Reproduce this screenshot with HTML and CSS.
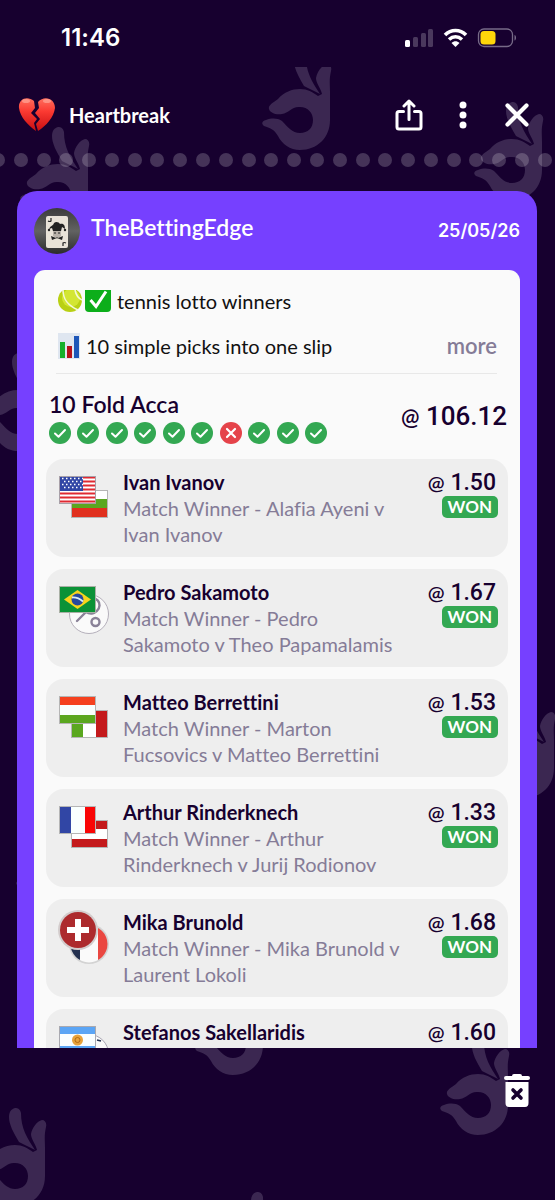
FILE: index.html
```html
<!DOCTYPE html>
<html lang="en">
<head>
    <meta charset="UTF-8">
    <meta name="viewport" content="width=device-width, initial-scale=1.0">
    <title>Heartbreak</title>
    <link rel="stylesheet" href="styles.css">
</head>
<body>

<!-- shared shapes -->
<svg class="defs" aria-hidden="true">
    <symbol id="hand" viewBox="0 0 70 98">
        <path d="M38 0C41 0 43 1 44 5C44 20 50 30 58 42C53 39 47 37 42 34C36 24 32 16 32 9C32 4 34 1 38 0Z"/>
        <path d="M65 12C68 12 70 15 69 19C67 28 68 32 68 40V68C68 86 55 98 38 98C28 98 20 92 16 84C12 77 8 76 2 74C-1 72 0 69 4 68C10 66 15 66 20 69C26 75 30 81 38 81C46 81 51 76 51 68C51 61 46 55 38 55C30 54 27 61 20 62C14 63 8 61 7 57C6 53 11 51 16 47C22 40 30 37 38 37C46 37 50 40 56 44L60 42C59 37 54 31 54 26C55 20 60 13 65 12Z"/>
    </symbol>
    <symbol id="tick" viewBox="0 0 22 22">
        <circle cx="11" cy="11" r="11" fill="#33a852"/>
        <path d="M6 11.500l3.500 3.200L16 8" fill="none" stroke="#fff" stroke-width="2" stroke-linecap="round" stroke-linejoin="round"/>
    </symbol>
    <symbol id="cross" viewBox="0 0 22 22">
        <circle cx="11" cy="11" r="11" fill="#e5434a"/>
        <path d="M7 7l8 8M15 7l-8 8" fill="none" stroke="#fff" stroke-width="2.200" stroke-linecap="round"/>
    </symbol>
</svg>

<svg class="hands" aria-hidden="true">
    <use href="#hand" x="20" y="60" width="70" height="98"/>
    <use href="#hand" x="262" y="-15" width="70" height="98"/>
    <use href="#hand" x="474" y="35" width="70" height="98"/>
    <use href="#hand" x="-20" y="286" width="70" height="98"/>
    <use href="#hand" x="486" y="633" width="70" height="98"/>
    <use href="#hand" x="16" y="745" width="70" height="98"/>
    <use href="#hand" x="195" y="910" width="70" height="98"/>
    <use href="#hand" x="440" y="970" width="70" height="98"/>
    <use href="#hand" x="-23" y="1041" width="70" height="98"/>
    <use href="#hand" x="219" y="1125" width="70" height="98"/>
</svg>

<div class="status">
    <span class="clock">11:46</span>
    <svg width="112" height="20" viewBox="0 0 112 20">
        <rect x="0" y="12" width="5" height="7" rx="1.500" fill="#fff"/>
        <g fill="#fff" opacity=".22">
            <rect x="8" y="9" width="5" height="10" rx="1.500"/>
            <rect x="16" y="5" width="5" height="14" rx="1.500"/>
            <rect x="23" y="1" width="5" height="18" rx="1.500"/>
        </g>
        <g fill="none" stroke="#fff" stroke-width="3.600">
            <path d="M40 7C46 1 55 1 61 7"/>
            <path d="M44 11.500C48 8 53 8 57 11.500"/>
        </g>
        <path d="M46.500 15C49 12.800 52 12.800 54.500 15L50.500 19Z" fill="#fff"/>
        <rect x="73.500" y="1" width="34" height="17.500" rx="5.500" fill="none" stroke="#776a88" stroke-width="1.300"/>
        <rect x="75.500" y="3" width="15" height="13.500" rx="3.500" fill="#ffd60a"/>
        <path d="M109.500 7V12.500C111.500 12 111.500 7.500 109.500 7Z" fill="#776a88"/>
    </svg>
</div>

<header class="topbar">
    <svg class="heart" width="38" height="36" viewBox="0 0 38 36">
        <defs>
            <linearGradient id="red" x1="0" y1="0" x2="0" y2="1">
                <stop offset="0" stop-color="#ff6f5e"/>
                <stop offset=".4" stop-color="#fb3a32"/>
                <stop offset="1" stop-color="#c80f12"/>
            </linearGradient>
        </defs>
        <path d="M16 4C9-2 0 2 1 11C2 20 10 28 18 34L16 26L19 22L13 16L17 11Z" fill="url(#red)"/>
        <path d="M20 5C26-2 37 1 37 11C36 20 28 29 20 34L18 27L22 22L17 16L21 11Z" fill="url(#red)"/>
        <ellipse cx="8" cy="4" rx="4" ry="2" fill="#ffb0a4" opacity=".6"/>
        <ellipse cx="29" cy="4" rx="4" ry="2" fill="#ffb0a4" opacity=".6"/>
    </svg>
    <h1>Heartbreak</h1>
    <button class="icon-btn" aria-label="Share">
        <svg width="28" height="32" viewBox="0 0 28 32" fill="none" stroke="#fff" stroke-width="3" stroke-linecap="round" stroke-linejoin="round">
            <path d="M8.500 12.500H4Q2 12.500 2 14.500V28Q2 30 4 30H24Q26 30 26 28V14.500Q26 12.500 24 12.500H19.500"/>
            <path d="M14 20.500V3M9 7L14 2L19 7"/>
        </svg>
    </button>
    <button class="icon-btn" aria-label="Menu">
        <svg width="28" height="28" viewBox="0 0 28 28" fill="#fff">
            <circle cx="14" cy="4" r="3.500"/>
            <circle cx="14" cy="14" r="3.500"/>
            <circle cx="14" cy="24" r="3.500"/>
        </svg>
    </button>
    <button class="icon-btn" aria-label="Close">
        <svg width="28" height="28" viewBox="0 0 28 28" stroke="#fff" stroke-width="4.200" stroke-linecap="round">
            <path d="M4.500 4.500L23.500 23.500M23.500 4.500L4.500 23.500"/>
        </svg>
    </button>
</header>

<div class="dots">
    <i></i><i></i><i></i><i></i><i></i><i></i><i></i><i></i><i></i><i></i><i></i><i></i><i></i>
    <i></i><i></i><i></i><i></i><i></i><i></i><i></i><i></i><i></i><i></i><i></i><i></i>
</div>

<main>
    <div class="slip">
        <div class="owner">
            <svg width="46" height="46" viewBox="0 0 46 46">
                <defs>
                    <linearGradient id="grey" x1="0" y1="0" x2="0" y2="1">
                        <stop offset="0" stop-color="#3b3b3b"/>
                        <stop offset=".5" stop-color="#626262"/>
                        <stop offset="1" stop-color="#2b2b2b"/>
                    </linearGradient>
                </defs>
                <circle cx="23" cy="23" r="23" fill="url(#grey)"/>
                <rect x="12" y="8" width="22" height="32" rx="2" fill="#e9e3d8"/>
                <path d="M17 10V13Q16 14 14 13M29 38V35Q30 34 32 35" fill="none" stroke="#222" stroke-width="1.200"/>
                <path d="M15 21C17 17 19 18 20 15C22 13 25 14 26 16C30 15 31 18 31 21L28 19L27 23H19L18 20Z" fill="#222"/>
                <circle cx="15" cy="22" r="1.200" fill="#222"/>
                <circle cx="31" cy="22" r="1.200" fill="#222"/>
                <path d="M19 23H27V28L23 31L19 28Z" fill="#b9b2aa"/>
                <path d="M17 28L22 30L23 29L24 30L29 28L28 32L23 30L18 32Z" fill="#222"/>
                <path d="M20 25h2M24 25h2" stroke="#222"/>
            </svg>
            <span class="owner-name">TheBettingEdge</span>
            <time datetime="2026-05-25">25/05/26</time>
        </div>

        <div class="panel">
            <div class="note">
                <p>
                    <svg width="24" height="22" viewBox="0 0 24 22">
                        <circle cx="12" cy="10" r="12" fill="#b9d014"/>
                        <circle cx="13" cy="8" r="9" fill="#d3e633"/>
                        <path d="M5 0C5 9 9 15 20 20M17 0C18 5 20 8 24 10" fill="none" stroke="#f4f8d8" stroke-width="1.600"/>
                    </svg>
                    <svg width="26" height="22" viewBox="0 0 26 22">
                        <path d="M0 0H26V18Q26 22 22 22H4Q0 22 0 18Z" fill="#0cae1a"/>
                        <path d="M5.500 10L11 16.500L21 1.500" fill="none" stroke="#fff" stroke-width="3"/>
                    </svg>
                    <span>tennis lotto winners</span>
                </p>
                <p>
                    <svg class="chart" width="22" height="26" viewBox="0 0 22 26">
                        <rect width="22" height="26" fill="#dfe6f0"/>
                        <rect x="2" y="9" width="5" height="16" fill="#15b02b"/>
                        <rect x="9" y="13" width="5" height="12" fill="#b5121b"/>
                        <rect x="16" y="3" width="5" height="22" fill="#1d56b8"/>
                    </svg>
                    <span>10 simple picks into one slip</span>
                    <button class="more">more</button>
                </p>
            </div>

            <div class="summary">
                <div>
                    <h2>10 Fold Acca</h2>
                    <div class="results">
                        <svg><use href="#tick"/></svg>
                        <svg><use href="#tick"/></svg>
                        <svg><use href="#tick"/></svg>
                        <svg><use href="#tick"/></svg>
                        <svg><use href="#tick"/></svg>
                        <svg><use href="#tick"/></svg>
                        <svg><use href="#cross"/></svg>
                        <svg><use href="#tick"/></svg>
                        <svg><use href="#tick"/></svg>
                        <svg><use href="#tick"/></svg>
                    </div>
                </div>
                <div class="odds total"><span>@</span> 106.12</div>
            </div>

            <ul class="picks">
                <li>
                    <svg class="flags" viewBox="0 0 52 54">
                        <rect x="12.500" y="16.500" width="36" height="27" fill="#fff" stroke="#b5b5b5"/>
                        <rect x="13" y="25" width="35" height="9" fill="#5aa71f"/>
                        <rect x="13" y="34" width="35" height="9" fill="#e0301e"/>
                        <rect x="1" y="2" width="36" height="27" fill="#fff"/>
                        <path d="M1 3.500H37M1 7.500H37M1 11.500H37M1 15.500H37M1 19.500H37M1 23.500H37M1 27.500H37" stroke="#e02a32" stroke-width="2"/>
                        <rect x="1" y="2" width="23" height="15" fill="#3146a5"/>
                        <path d="M3 4.500H24M5 7.500H24M3 10.500H24M5 13.500H24" stroke="#fff" stroke-width="1.500" stroke-dasharray="1.500 2.500"/>
                        <rect x=".5" y="2.500" width="36" height="27" fill="none" stroke="#a8a0a8"/>
                    </svg>
                    <div class="pick">
                        <h3>Ivan Ivanov</h3>
                        <p>Match Winner - Alafia Ayeni v Ivan Ivanov</p>
                    </div>
                    <div class="price">
                        <div class="odds"><span>@</span> 1.50</div>
                        <span class="badge">WON</span>
                    </div>
                </li>
                <li>
                    <svg class="flags" viewBox="0 0 52 54">
                        <circle cx="30" cy="30" r="19.500" fill="#fafafa" stroke="#b5b0bb"/>
                        <g fill="none" stroke="#8a8298" stroke-width="2.400" stroke-linecap="round">
                            <ellipse cx="33" cy="22" rx="7" ry="8" transform="rotate(45 33 22)"/>
                            <path d="M27 28L18 37M27 28L34 29"/>
                            <circle cx="36.500" cy="38" r="4"/>
                        </g>
                        <rect x=".5" y="2.500" width="36" height="26" fill="#0b9237" stroke="#a9b0a5"/>
                        <path d="M5 15.500L18.500 6L32 15.500L18.500 25Z" fill="#f8d41c"/>
                        <circle cx="18.500" cy="15.500" r="6" fill="#28489c"/>
                        <path d="M13 13.500Q19 13 24 17.500" fill="none" stroke="#d9ecf5" stroke-width="1.800"/>
                    </svg>
                    <div class="pick">
                        <h3>Pedro Sakamoto</h3>
                        <p>Match Winner - Pedro Sakamoto v Theo Papamalamis</p>
                    </div>
                    <div class="price">
                        <div class="odds"><span>@</span> 1.67</div>
                        <span class="badge">WON</span>
                    </div>
                </li>
                <li>
                    <svg class="flags" viewBox="0 0 52 54">
                        <rect x="12.500" y="16.500" width="36" height="27" fill="#fff" stroke="#b5b5b5"/>
                        <rect x="13" y="17" width="11" height="26" fill="#5aa71f"/>
                        <rect x="37" y="17" width="11" height="26" fill="#c41a1c"/>
                        <rect x=".5" y="2.500" width="36" height="27" fill="#f9fffe" stroke="#b5b5b5"/>
                        <rect x="1" y="3" width="35" height="8" fill="#f5411f"/>
                        <rect x="1" y="21" width="35" height="8" fill="#5aa71f"/>
                    </svg>
                    <div class="pick">
                        <h3>Matteo Berrettini</h3>
                        <p>Match Winner - Marton Fucsovics v Matteo Berrettini</p>
                    </div>
                    <div class="price">
                        <div class="odds"><span>@</span> 1.53</div>
                        <span class="badge">WON</span>
                    </div>
                </li>
                <li>
                    <svg class="flags" viewBox="0 0 52 54">
                        <rect x="12.500" y="16.500" width="36" height="27" fill="#fff" stroke="#b5b5b5"/>
                        <rect x="13" y="17" width="35" height="8" fill="#c41a1c"/>
                        <rect x="13" y="35" width="35" height="8" fill="#c41a1c"/>
                        <rect x=".5" y="2.500" width="36" height="27" fill="#f9fffe" stroke="#b5b5b5"/>
                        <rect x="1" y="3" width="11" height="26" fill="#3146a5"/>
                        <rect x="26" y="3" width="10" height="26" fill="#f90606"/>
                    </svg>
                    <div class="pick">
                        <h3>Arthur Rinderknech</h3>
                        <p>Match Winner - Arthur Rinderknech v Jurij Rodionov</p>
                    </div>
                    <div class="price">
                        <div class="odds"><span>@</span> 1.33</div>
                        <span class="badge">WON</span>
                    </div>
                </li>
                <li>
                    <svg class="flags" viewBox="0 0 52 54">
                        <clipPath id="round"><circle cx="30" cy="30" r="18.500"/></clipPath>
                        <circle cx="30" cy="30" r="20" fill="#d3d3d3"/>
                        <g clip-path="url(#round)">
                            <rect x="10" y="10" width="11" height="40" fill="#23304f"/>
                            <rect x="21" y="10" width="18" height="40" fill="#fafafa"/>
                            <rect x="39" y="10" width="12" height="40" fill="#ea4741"/>
                        </g>
                        <circle cx="19" cy="16" r="20" fill="#d3cccc"/>
                        <circle cx="19" cy="16" r="18" fill="#ad2a2d"/>
                        <path d="M19 5V27M8 16H30" stroke="#fff" stroke-width="6"/>
                    </svg>
                    <div class="pick">
                        <h3>Mika Brunold</h3>
                        <p>Match Winner - Mika Brunold v Laurent Lokoli</p>
                    </div>
                    <div class="price">
                        <div class="odds"><span>@</span> 1.68</div>
                        <span class="badge">WON</span>
                    </div>
                </li>
                <li>
                    <svg class="flags" viewBox="0 0 52 54">
                        <circle cx="30" cy="30" r="19.500" fill="#fafafa" stroke="#a9a5b3"/>
                        <path d="M38 16L42 17" stroke="#23304f" stroke-width="1.500"/>
                        <rect x=".5" y="2.500" width="36" height="27" fill="#fafeff" stroke="#a9a9b0"/>
                        <rect x="1" y="3" width="35" height="7" fill="#5ba5f5"/>
                        <rect x="1" y="22" width="35" height="7" fill="#5ba5f5"/>
                        <circle cx="18.500" cy="16" r="5.500" fill="#e8a23a"/>
                        <circle cx="18.500" cy="16" r="2.500" fill="none" stroke="#b36b14"/>
                    </svg>
                    <div class="pick">
                        <h3>Stefanos Sakellaridis</h3>
                    </div>
                    <div class="price">
                        <div class="odds"><span>@</span> 1.60</div>
                    </div>
                </li>
            </ul>
        </div>
    </div>
</main>

<footer>
    <button class="icon-btn" aria-label="Delete slip">
        <svg width="28" height="34" viewBox="0 0 28 34">
            <path d="M9 2Q9 0 11 0H17Q19 0 19 2H25Q27 2 27 4Q27 6 25 6H3Q1 6 1 4Q1 2 3 2Z" fill="#fff"/>
            <path d="M2.500 8H25.500V29Q25.500 33 22 33H6Q2.500 33 2.500 29Z" fill="#fff"/>
            <path d="M10 16L18 24M18 16L10 24" stroke="#17002f" stroke-width="3.600" stroke-linecap="round"/>
        </svg>
    </button>
</footer>

</body>
</html>
```

FILE: styles.css
```css
* {
    box-sizing: border-box;
    margin: 0;
    padding: 0;
}
body {
    height: 100vh;
    display: flex;
    flex-direction: column;
    position: relative;
    overflow: hidden;
    background: #17002f;
    color: #17002f;
    font-family: Lato, "Liberation Sans", sans-serif;
    font-size: 20px;
    font-variant-ligatures: none;
}
button {
    border: none;
    background: none;
    font: inherit;
    cursor: pointer;
}
svg { flex: none; }
.defs {
    position: absolute;
    width: 0;
    height: 0;
}
.hands {
    position: absolute;
    top: 67px;
    left: 0;
    width: 100%;
    height: calc(100% - 67px);
    fill: #3b2751;
    z-index: -1;
}

/* status bar */
.status {
    height: 75px;
    padding: 0 38px 0 61px;
    display: flex;
    align-items: center;
    justify-content: space-between;
}
.clock {
    color: white;
    font-family: Inter, sans-serif;
    font-weight: 600;
    font-size: 24px;
}

/* top bar */
.topbar {
    height: 78px;
    padding: 2px 24px 0 18px;
    display: flex;
    align-items: center;
    gap: 26px;
    color: white;
}
.topbar h1 {
    flex: 1;
    margin-left: -13px;
    font-size: 20px;
    font-weight: 700;
}
.icon-btn {
    width: 28px;
    display: flex;
    justify-content: center;
}
.dots {
    height: 38px;
    margin-left: -9px;
    padding-right: 3px;
    display: flex;
    justify-content: space-between;
}
.dots i {
    width: 14px;
    height: 14px;
    border-radius: 50%;
    background: rgba(255, 255, 255, 0.2);
}

/* bet slip */
main {
    flex: 1;
    overflow: hidden;
    padding: 0 18px 0 17px;
}
.slip {
    padding: 0 17px;
    border-radius: 20px;
    background: #7640ff;
}
.owner {
    height: 79px;
    display: flex;
    align-items: center;
    gap: 11px;
    color: white;
}
.owner-name {
    flex: 1;
    padding-bottom: 8px;
    font-size: 23px;
    font-weight: 600;
}
.owner time {
    font-family: Inter, sans-serif;
    font-size: 18px;
    font-weight: 600;
}
.panel {
    padding: 8px 12px;
    border-radius: 11px;
    background: #fafafa;
}
.note {
    margin: 0 11px 0 10px;
    padding-bottom: 5px;
    border-bottom: 1px solid #e8e8e8;
    color: #111;
}
.note p {
    height: 45px;
    padding-left: 2px;
    display: flex;
    align-items: center;
    gap: 3px;
}
.note span { padding-left: 3px; }
.more {
    margin-left: auto;
    color: #857c97;
    font-size: 22px;
    font-weight: 600;
}
.summary {
    padding: 14px 1px 15px 3px;
    display: flex;
    justify-content: space-between;
    align-items: center;
}
.summary h2 {
    padding-bottom: 2px;
    font-size: 23px;
    font-weight: 600;
    line-height: 32px;
}
.results {
    width: 278px;
    display: flex;
    justify-content: space-between;
}
.results svg {
    width: 22px;
    height: 22px;
}
.odds {
    font-family: Roboto, sans-serif;
    font-size: 23px;
    font-weight: 500;
    line-height: 26px;
    white-space: nowrap;
}
.odds span {
    font-family: Lato, sans-serif;
    font-size: 20px;
    font-weight: 600;
}
.total { font-size: 26px; }
.total span { font-size: 22px; }
.picks {
    display: flex;
    flex-direction: column;
    gap: 12px;
    list-style: none;
}
.picks li {
    min-height: 98px;
    padding: 10px 10px 10px 13px;
    display: flex;
    border-radius: 18px;
    background: #eee;
}
.flags {
    width: 52px;
    height: 54px;
    margin: 5px 12px 0 0;
    overflow: visible;
}
.pick {
    flex: 1;
    line-height: 26px;
}
.pick h3 {
    font-size: 20px;
    font-weight: 700;
}
.pick p { color: #857c97; }
.price {
    width: 94px;
    display: flex;
    flex-direction: column;
    align-items: flex-end;
}
.price .odds { padding-right: 2px; }
.badge {
    padding: 0 6px;
    border-radius: 5px;
    background: #33a852;
    color: white;
    font-size: 17px;
    font-weight: 700;
    line-height: 22px;
}

footer {
    height: 152px;
    padding: 26px 24px;
    display: flex;
    align-items: flex-start;
    justify-content: flex-end;
}
```
